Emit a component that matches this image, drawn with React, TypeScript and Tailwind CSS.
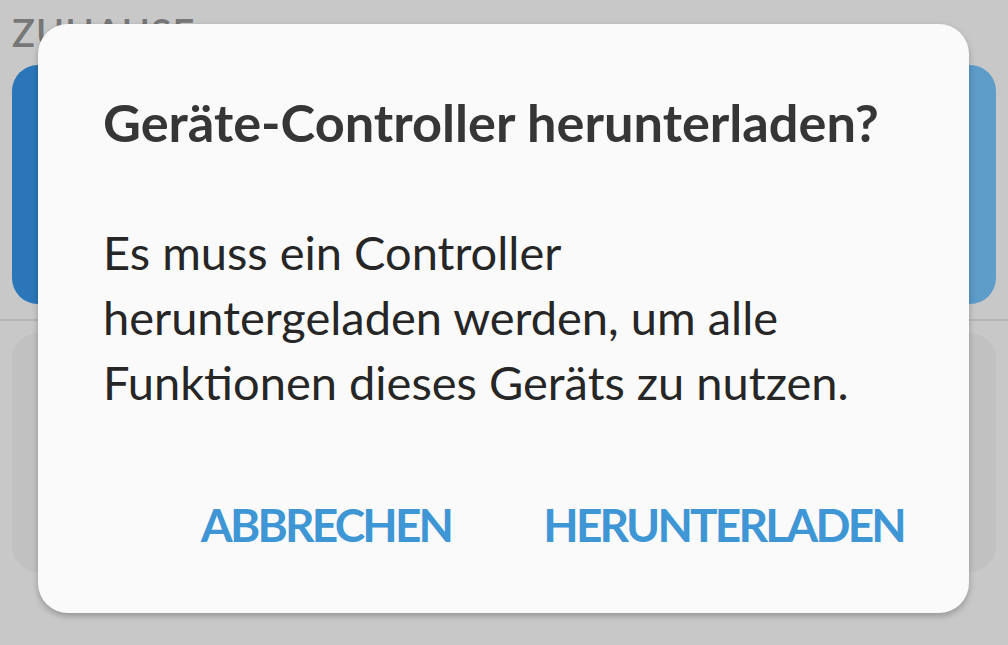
export default function App() {
  return (
    <div className="relative h-[645px] w-[1008px] overflow-hidden bg-[#c8c8c8] font-['Lato',sans-serif]">
      {/* background screen (dimmed) */}
      <div className="flex flex-col px-3 pt-[10px]">
        <div className="h-[55px] text-[38px] font-semibold leading-[44px] tracking-[1px] text-[#777777]">ZUHAUSE</div>
        <div className="h-[239px] rounded-[26px] bg-gradient-to-r from-[#2a76b8] to-[#5e9cc9]" />
        <div className="-mx-3 mt-[15px] h-[2px] bg-[#b6b6b6]" />
        <div className="mt-[12px] h-[239px] rounded-[26px] bg-[#c1c1c1]" />
      </div>

      {/* dialog */}
      <div className="absolute left-[38px] top-[24px] flex h-[589px] w-[931px] flex-col rounded-[30px] bg-[#fafafa] px-[65px] pt-[72px] shadow-[0_3px_6px_rgba(0,0,0,0.25)]">
        <h1 className="text-[52.3px] font-bold leading-[52px] text-[#363636]">Geräte-Controller herunterladen?</h1>
        <p className="mt-[72px] text-[47px] leading-[65px] text-[#262626]">
          Es muss ein Controller
          <br />
          heruntergeladen werden, um alle
          <br />
          Funktionen dieses Geräts zu nutzen.
        </p>
        <div className="mt-[85px] flex justify-end gap-[92px]">
          <button className="text-[46px] font-bold leading-[50px] tracking-[-2.8px] text-[#3f96d4]">ABBRECHEN</button>
          <button className="text-[46px] font-bold leading-[50px] tracking-[-2.8px] text-[#3f96d4]">HERUNTERLADEN</button>
        </div>
      </div>
    </div>
  );
}
